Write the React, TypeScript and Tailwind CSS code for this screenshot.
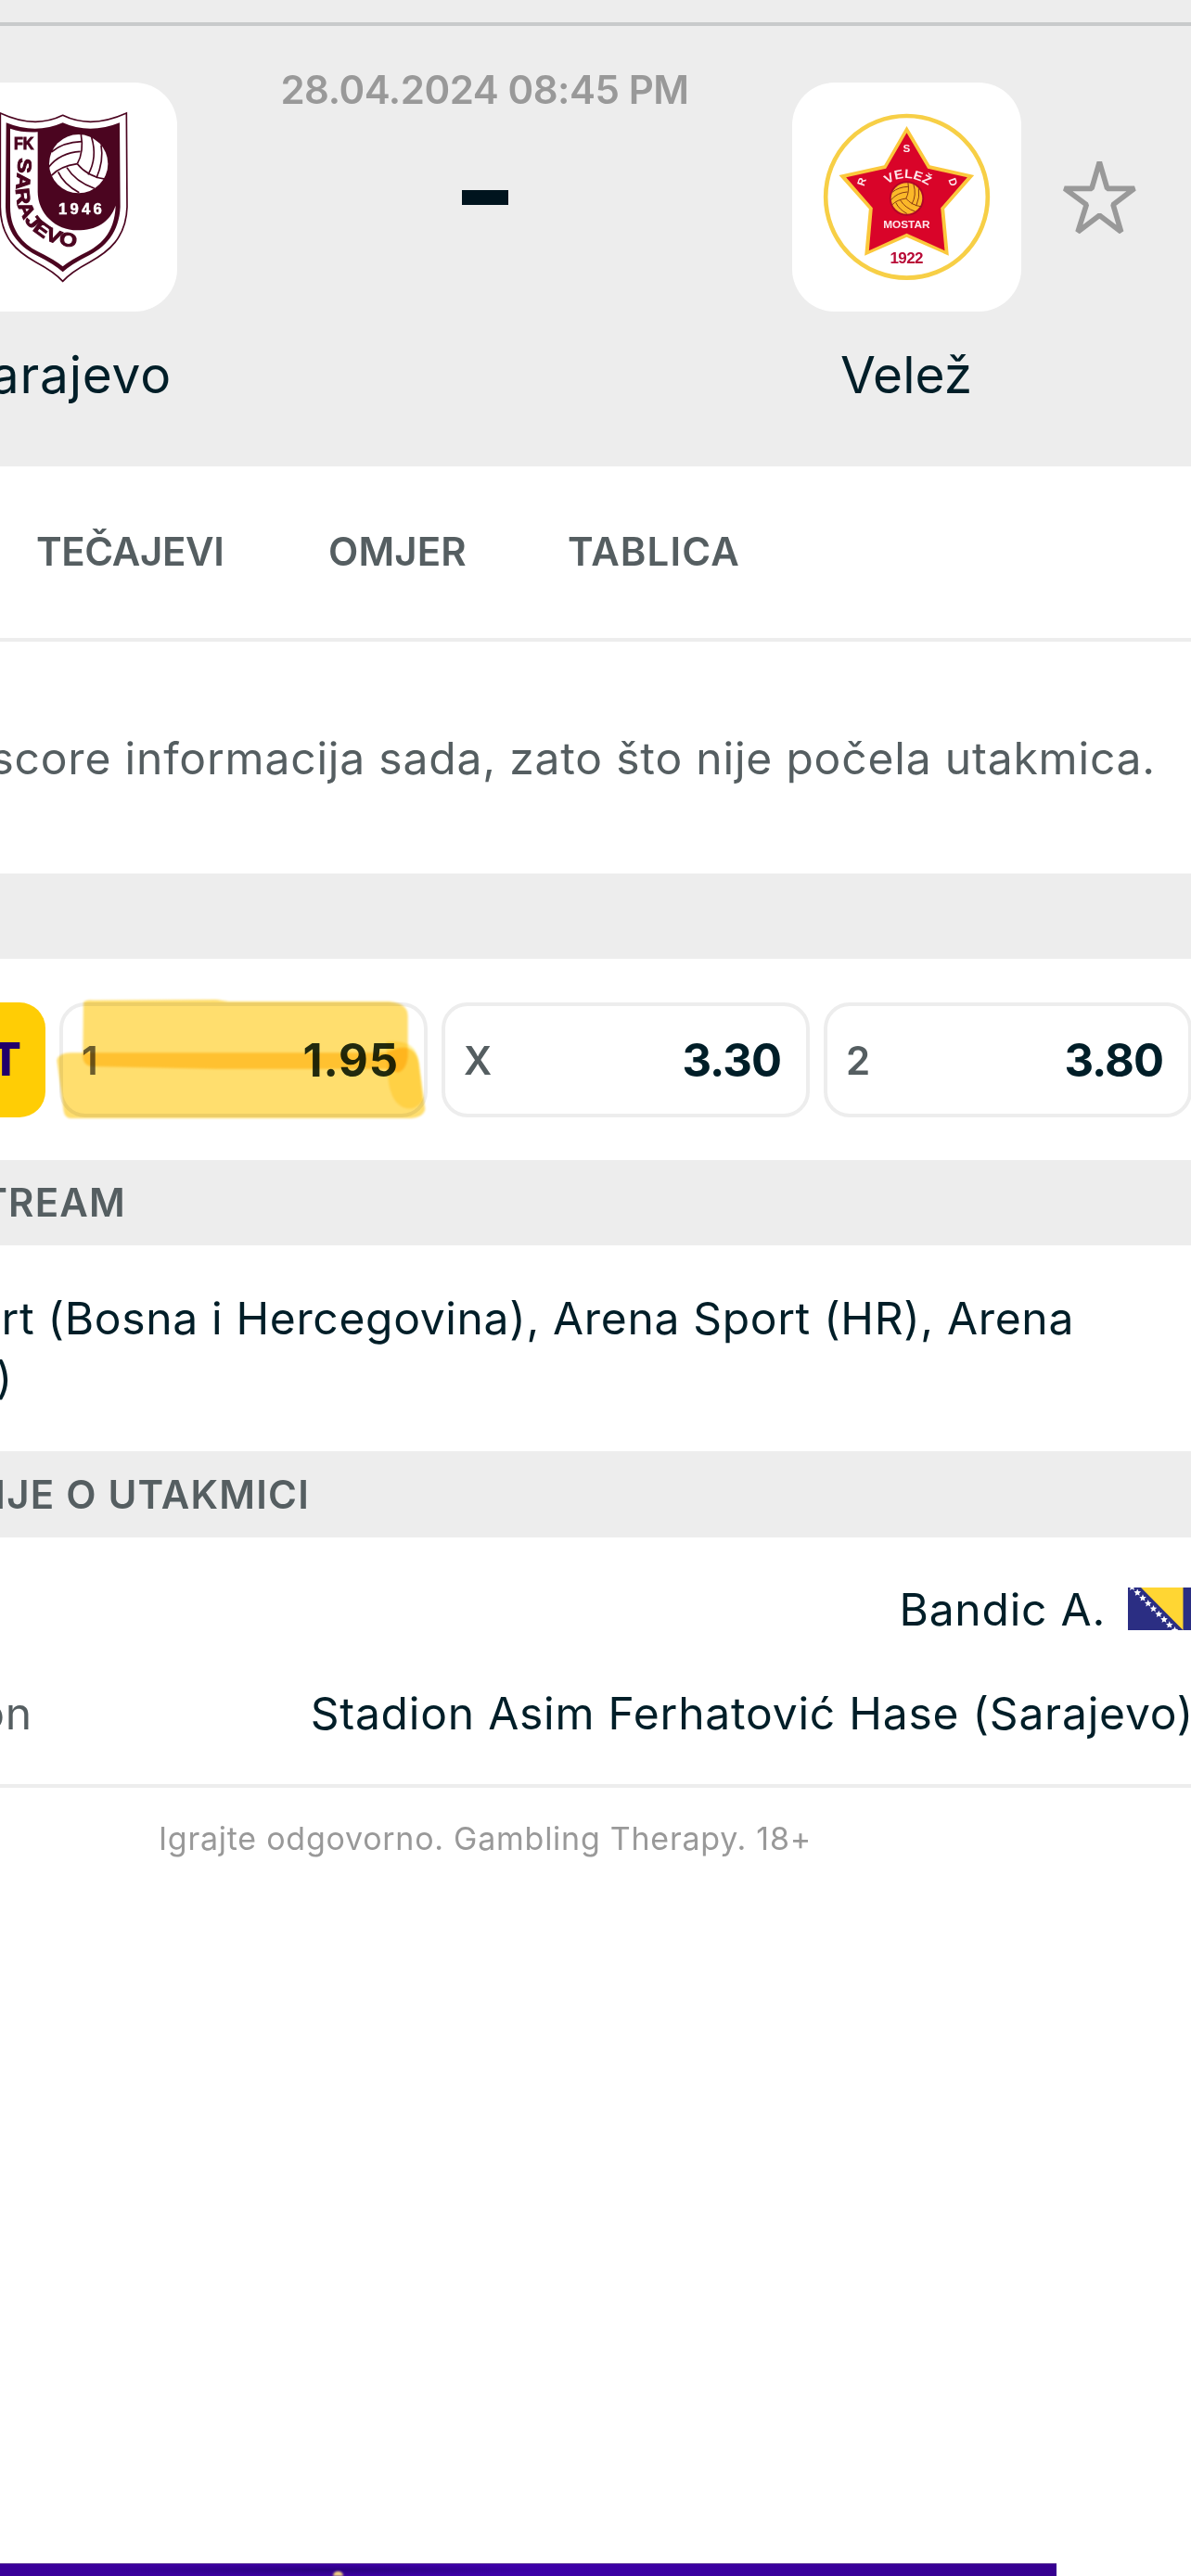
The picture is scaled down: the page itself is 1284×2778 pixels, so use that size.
import type { ReactNode } from "react";

const tabs = [
    { label: "TEČAJEVI", className: "w-[315px] tracking-[-0.4px]" },
    { label: "OMJER", className: "w-[258px] tracking-[0.1px]" },
    { label: "TABLICA", className: "tracking-[1.1px]" },
];

const odds = [
    { label: "1", price: "1.95", labelColor: "text-[#6b6a66]", priceColor: "text-[#22301f] tracking-[0.9px]", marked: true },
    { label: "X", price: "3.30", labelColor: "text-[#555e61]", priceColor: "tracking-[-1px]", marked: false },
    { label: "2", price: "3.80", labelColor: "text-[#555e61]", priceColor: "tracking-[-1px]", marked: false },
];

const flagStars = [0, 1, 2, 3, 4, 5, 6, 7, 8];

function Ball({ x, y, scale, fill, line }: { x: number; y: number; scale: number; fill: string; line: string }) {
    return (
        <g transform={`translate(${x} ${y}) scale(${scale})`} fill="none" stroke={line} strokeWidth={5}>
            <circle r="95" fill={fill} stroke="none" />
            <path d="M8 -95Q18 -40 -4 0" />
            <path d="M-4 0Q-60 8 -88 38" />
            <path d="M-4 0Q30 42 90 50" />
            <path d="M-88 -38Q-50 -70 10 -72" />
            <path d="M-96 10Q-60 -36 6 -40" />
            <path d="M42 -86Q62 -20 31 35" />
            <path d="M73 -60Q82 -10 58 46" />
            <path d="M-38 12Q-10 58 52 80" />
            <path d="M-66 26Q-48 66 2 93" />
        </g>
    );
}

function SarajevoCrest() {
    return (
        <svg viewBox="0 27 573 741" className="h-full w-full font-['Liberation_Sans',sans-serif] font-bold">
            <path d="M1 126Q112 178 203 133Q294 178 409 126L411 430C408 530 350 575 290 608Q230 640 203 670Q176 640 116 608C56 575 2 530 1 430Z" fill="#fff" stroke="#4b0520" strokeWidth="5" />
            <path d="M20 157Q115 196 203 157Q290 196 387 157L389 430C385 510 345 555 290 585Q230 615 203 640Q176 615 116 585C60 555 20 510 18 430Z" fill="#4b0520" />
            <path d="M33 176Q75 190 122 187V380C122 450 180 505 250 505C310 505 355 480 374 425C371 510 330 548 285 573Q230 600 203 622Q176 600 121 573C70 548 33 500 33 430Z" fill="#fff" />
            <Ball x={254} y={290} scale={1} fill="#fff" line="#4b0520" />
            <text x="189" y="453" fontSize="50" fill="#fff" stroke="#fff" strokeWidth="1.5" textLength="140">1946</text>
            <g fill="#4b0520" stroke="#4b0520" strokeWidth="3">
                <text x="45" y="244" fontSize="54" textLength="64" lengthAdjust="spacingAndGlyphs">FK</text>
                <path id="sarajevo-arc" d="M60 270L52 370C50 460 110 562 280 562" fill="none" stroke="none" />
                <text fontSize="62" textLength="402" lengthAdjust="spacingAndGlyphs">
                    <textPath href="#sarajevo-arc">SARAJEVO</textPath>
                </text>
            </g>
        </svg>
    );
}

function VelezCrest() {
    return (
        <svg viewBox="42 57 740 741" className="h-full w-full font-['Liberation_Sans',sans-serif] font-bold">
            <circle cx="412" cy="427" r="262" fill="none" stroke="#f7cf46" strokeWidth="14" />
            <path d="M412 198L487 325L630 357L534 466L548 617L412 557L276 617L290 466L193 357L339 325Z" fill="#fbc83c" />
            <path d="M412 220L480 335L608 364L522 463L535 601L412 545L290 601L302 463L216 364L345 335Z" fill="#d90429" />
            <circle cx="412" cy="432" r="56" fill="#b10528" />
            <Ball x={412} y={432} scale={0.53} fill="#fbb829" line="#7a2a10" />
            <path id="velez-arc" d="M349 386Q412 342 490 396" fill="none" />
            <g fill="#fde8ec" fontSize="35">
                <text fontSize="41" textLength="142" lengthAdjust="spacingAndGlyphs">
                    <textPath href="#velez-arc">VELEŽ</textPath>
                </text>
                <text x="400" y="283">S</text>
                <text x="336" y="527" textLength="151" lengthAdjust="spacingAndGlyphs">MOSTAR</text>
                <text transform="translate(274 394) rotate(-72)">R</text>
                <text transform="translate(546 371) rotate(70)">D</text>
            </g>
            <text x="358" y="642" fontSize="51" fill="#b80a36" textLength="108">1922</text>
        </svg>
    );
}

function BosniaFlag() {
    return (
        <svg viewBox="0 0 68 46" className="mb-[3px] h-[46px] w-[68px]">
            <rect width="68" height="46" fill="#2b2e83" />
            <path d="M14 0H59.500V46Z" fill="#ffd633" />
            {flagStars.map((i) => (
                <path
                    key={i}
                    transform={`translate(${4.5 + i * 5.75} ${-0.5 + i * 5.8})`}
                    d="M0 -3.800L1.100 -1.200L3.800 -1L1.800 .900L2.400 3.500L0 2.100L-2.400 3.500L-1.800 .900L-3.800 -1L-1.100 -1.200Z"
                    fill="#fff"
                />
            ))}
        </svg>
    );
}

// Hand drawn marker strokes over the first odd
function Marker() {
    return (
        <svg viewBox="180 45 1210 405" className="absolute -top-[10px] -left-[8px] h-[135px] w-[403px] max-w-none mix-blend-multiply">
            <path className="mix-blend-multiply blur-[3px]" d="M270 62Q280 54 300 56L700 54L740 60H1260Q1322 66 1320 110V240Q1315 280 1290 290L1250 278L700 278L300 270Q268 270 268 235Z" fill="#ffde6e" />
            <path className="mix-blend-multiply blur-[3px]" d="M184 250Q190 226 230 226H1250Q1340 180 1356 260L1376 410Q1370 436 1330 438H230Q210 438 206 415Z" fill="#ffde6e" />
            <path className="mix-blend-multiply blur-[3px]" d="M1250 190Q1345 180 1354 250L1368 380Q1340 420 1300 400Q1262 380 1255 300Z" fill="#fff0a0" />
        </svg>
    );
}

function TeamCard({ children, className }: { children: ReactNode; className: string }) {
    return <div className={`mt-[17px] h-[247px] overflow-hidden bg-white ${className}`}>{children}</div>;
}

function SectionBar({ children, className = "h-[92px]" }: { children?: ReactNode; className?: string }) {
    return (
        <div className={`flex shrink-0 items-center bg-[#ededed] text-[42px] leading-none font-semibold text-[#555e61] ${className}`}>
            {children}
        </div>
    );
}

export default function App() {
    return (
        <div className="flex h-[2778px] w-[1284px] flex-col overflow-hidden bg-white font-['Inter',sans-serif] text-[#001e28]">
            <header className="h-[503px] shrink-0 bg-[#ededed] pt-[24px]">
                <div className="h-[4px] bg-[#c8cacb]" />
                <div className="flex items-start pt-[44px]">
                    <div className="w-[191px]">
                        <TeamCard className="rounded-r-[46px]">
                            <SarajevoCrest />
                        </TeamCard>
                        <div className="mt-[35px] flex justify-end pr-[6px] text-[55px] leading-[66px] tracking-[0.8px]">arajevo</div>
                    </div>
                    <div className="flex w-[663px] flex-col items-center">
                        <div className="pt-[1px] text-[42px] leading-[48px] font-semibold tracking-[-0.45px] text-[#999]">28.04.2024 08:45 PM</div>
                        <div className="mt-[84px] h-[16px] w-[50px] bg-[#00141e]" />
                    </div>
                    <div className="w-[247px]">
                        <TeamCard className="rounded-[46px]">
                            <VelezCrest />
                        </TeamCard>
                        <div className="mt-[35px] pr-[1px] text-center text-[55px] leading-[66px]">Velež</div>
                    </div>
                    <svg viewBox="918 309 237 237" className="mt-[101px] ml-[45px] h-[79px] w-[79px]" fill="none" stroke="#999" strokeWidth="17" strokeLinejoin="bevel">
                        <path d="M1036 314L1061 400H1149L1080 452L1106 540L1036 487L966 540L994 452L923 400H1011Z" />
                    </svg>
                </div>
            </header>

            <nav className="flex h-[189px] shrink-0 items-center border-b-[4px] border-[#ededed] pb-[2px] pl-[39px] text-[42px] font-semibold text-[#555e61]">
                {tabs.map((tab) => (
                    <div key={tab.label} className={tab.className}>{tab.label}</div>
                ))}
            </nav>

            <div className="flex h-[250px] shrink-0 items-center justify-end pt-[1px] pr-[38px] text-[48px] tracking-[0.81px] whitespace-nowrap text-[#555e61]">
                score informacija sada, zato što nije počela utakmica.
            </div>

            <SectionBar />

            <div className="flex h-[217px] shrink-0 pt-[47px]">
                <div className="flex h-[124px] w-[49px] items-center justify-end rounded-r-[28px] bg-[#ffcd05] pr-[26px] text-[49px] font-extrabold text-[#22006b]">
                    T
                </div>
                {odds.map((odd) => (
                    <div key={odd.label} className="relative ml-[15px] flex h-[124px] w-[397px] shrink-0 items-center justify-between rounded-[28px] border-[4px] border-[#ededed] pr-[27px] pl-[20px]">
                        <span className={`text-[42px] font-semibold ${odd.labelColor}`}>{odd.label}</span>
                        <span className={`pt-[1px] text-[49px] font-bold ${odd.priceColor}`}>{odd.price}</span>
                        {odd.marked && <Marker />}
                    </div>
                ))}
            </div>

            <SectionBar className="h-[92px] tracking-[1.2px]">
                <span className="flex w-[136px] justify-end">TREAM</span>
            </SectionBar>

            <div className="h-[222px] shrink-0 pt-[47px] text-[48px] leading-[64px] tracking-[0.66px] whitespace-nowrap">
                <div className="flex w-[1158px] justify-end">ort (Bosna i Hercegovina), Arena Sport (HR), Arena</div>
                <div className="flex w-[14px] justify-end">)</div>
            </div>

            <SectionBar className="h-[93px] tracking-[1.2px]">
                <span className="flex w-[334px] justify-end whitespace-nowrap">IJE O UTAKMICI</span>
            </SectionBar>

            <div className="shrink-0 border-b-[4px] border-[#ededed] pt-[22px] pb-[20px] text-[48px] tracking-[0.77px]">
                <div className="flex h-[112px] items-center justify-end">
                    <span className="mr-[24px]">Bandic A.</span>
                    <BosniaFlag />
                </div>
                <div className="flex h-[112px] items-center justify-between">
                    <span className="flex w-[35px] justify-end text-[#555e61]">on</span>
                    <span className="-mr-[3px] whitespace-nowrap">Stadion Asim Ferhatović Hase (Sarajevo)</span>
                </div>
            </div>

            <p className="pl-[171px] text-[34px] leading-[109px] tracking-[0.74px] text-[#999]">Igrajte odgovorno. Gambling Therapy. 18+</p>

            {/* Only the top edge of the promo banner shows */}
            <div className="mt-auto flex h-[14px] w-[1139px] shrink-0 items-end border-t border-[#7a5aa8] bg-linear-to-r from-[#3a0099] via-[#3d00a8] to-[#360090]">
                <div className="ml-[110px] h-full w-[480px] bg-[radial-gradient(closest-side,#2a0080,transparent)]" />
                <div className="-ml-[231px] h-[5px] w-[11px] rounded-t-full bg-[#f0d080] blur-[1px]" />
            </div>
        </div>
    );
}
